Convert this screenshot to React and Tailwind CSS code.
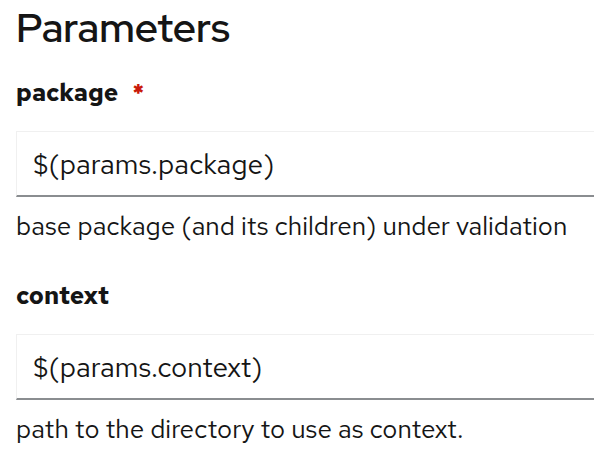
import React from "react";

const PARAMS = [
  { name: "package", required: true, value: "$(params.package)", help: "base package (and its children) under validation" },
  { name: "context", required: false, value: "$(params.context)", help: "path to the directory to use as context." },
];

export default function App() {
  return (
    <div
      className="w-[594px] h-[456px] overflow-hidden bg-white pl-4 text-[#151515]"
      style={{ fontFamily: "'Red Hat Text', 'Open Sans', sans-serif" }}
    >
      <h2
        className="text-[40.5px] leading-[56px] font-semibold"
        style={{ fontFamily: "'Red Hat Display', 'Open Sans', sans-serif" }}
      >
        Parameters
      </h2>
      <div className="mt-[18px]">
        {PARAMS.map((p, i) => (
          <div key={i} className="mb-[33px]">
            <label className="flex items-center text-[24.5px] font-bold leading-[36px]">
              {p.name}
              {p.required && <span className="ml-[14px] text-[#c9190b]">*</span>}
            </label>
            <div className="mt-[21px] w-[620px] h-[66px] border-[1.5px] border-[#f0f0f0] border-b-2 border-b-[#8a8d90] flex items-center pl-[16px] text-[28px]">
              {p.value}
            </div>
            <p className="mt-[11px] text-[26px] leading-[36px]">{p.help}</p>
          </div>
        ))}
      </div>
    </div>
  );
}
